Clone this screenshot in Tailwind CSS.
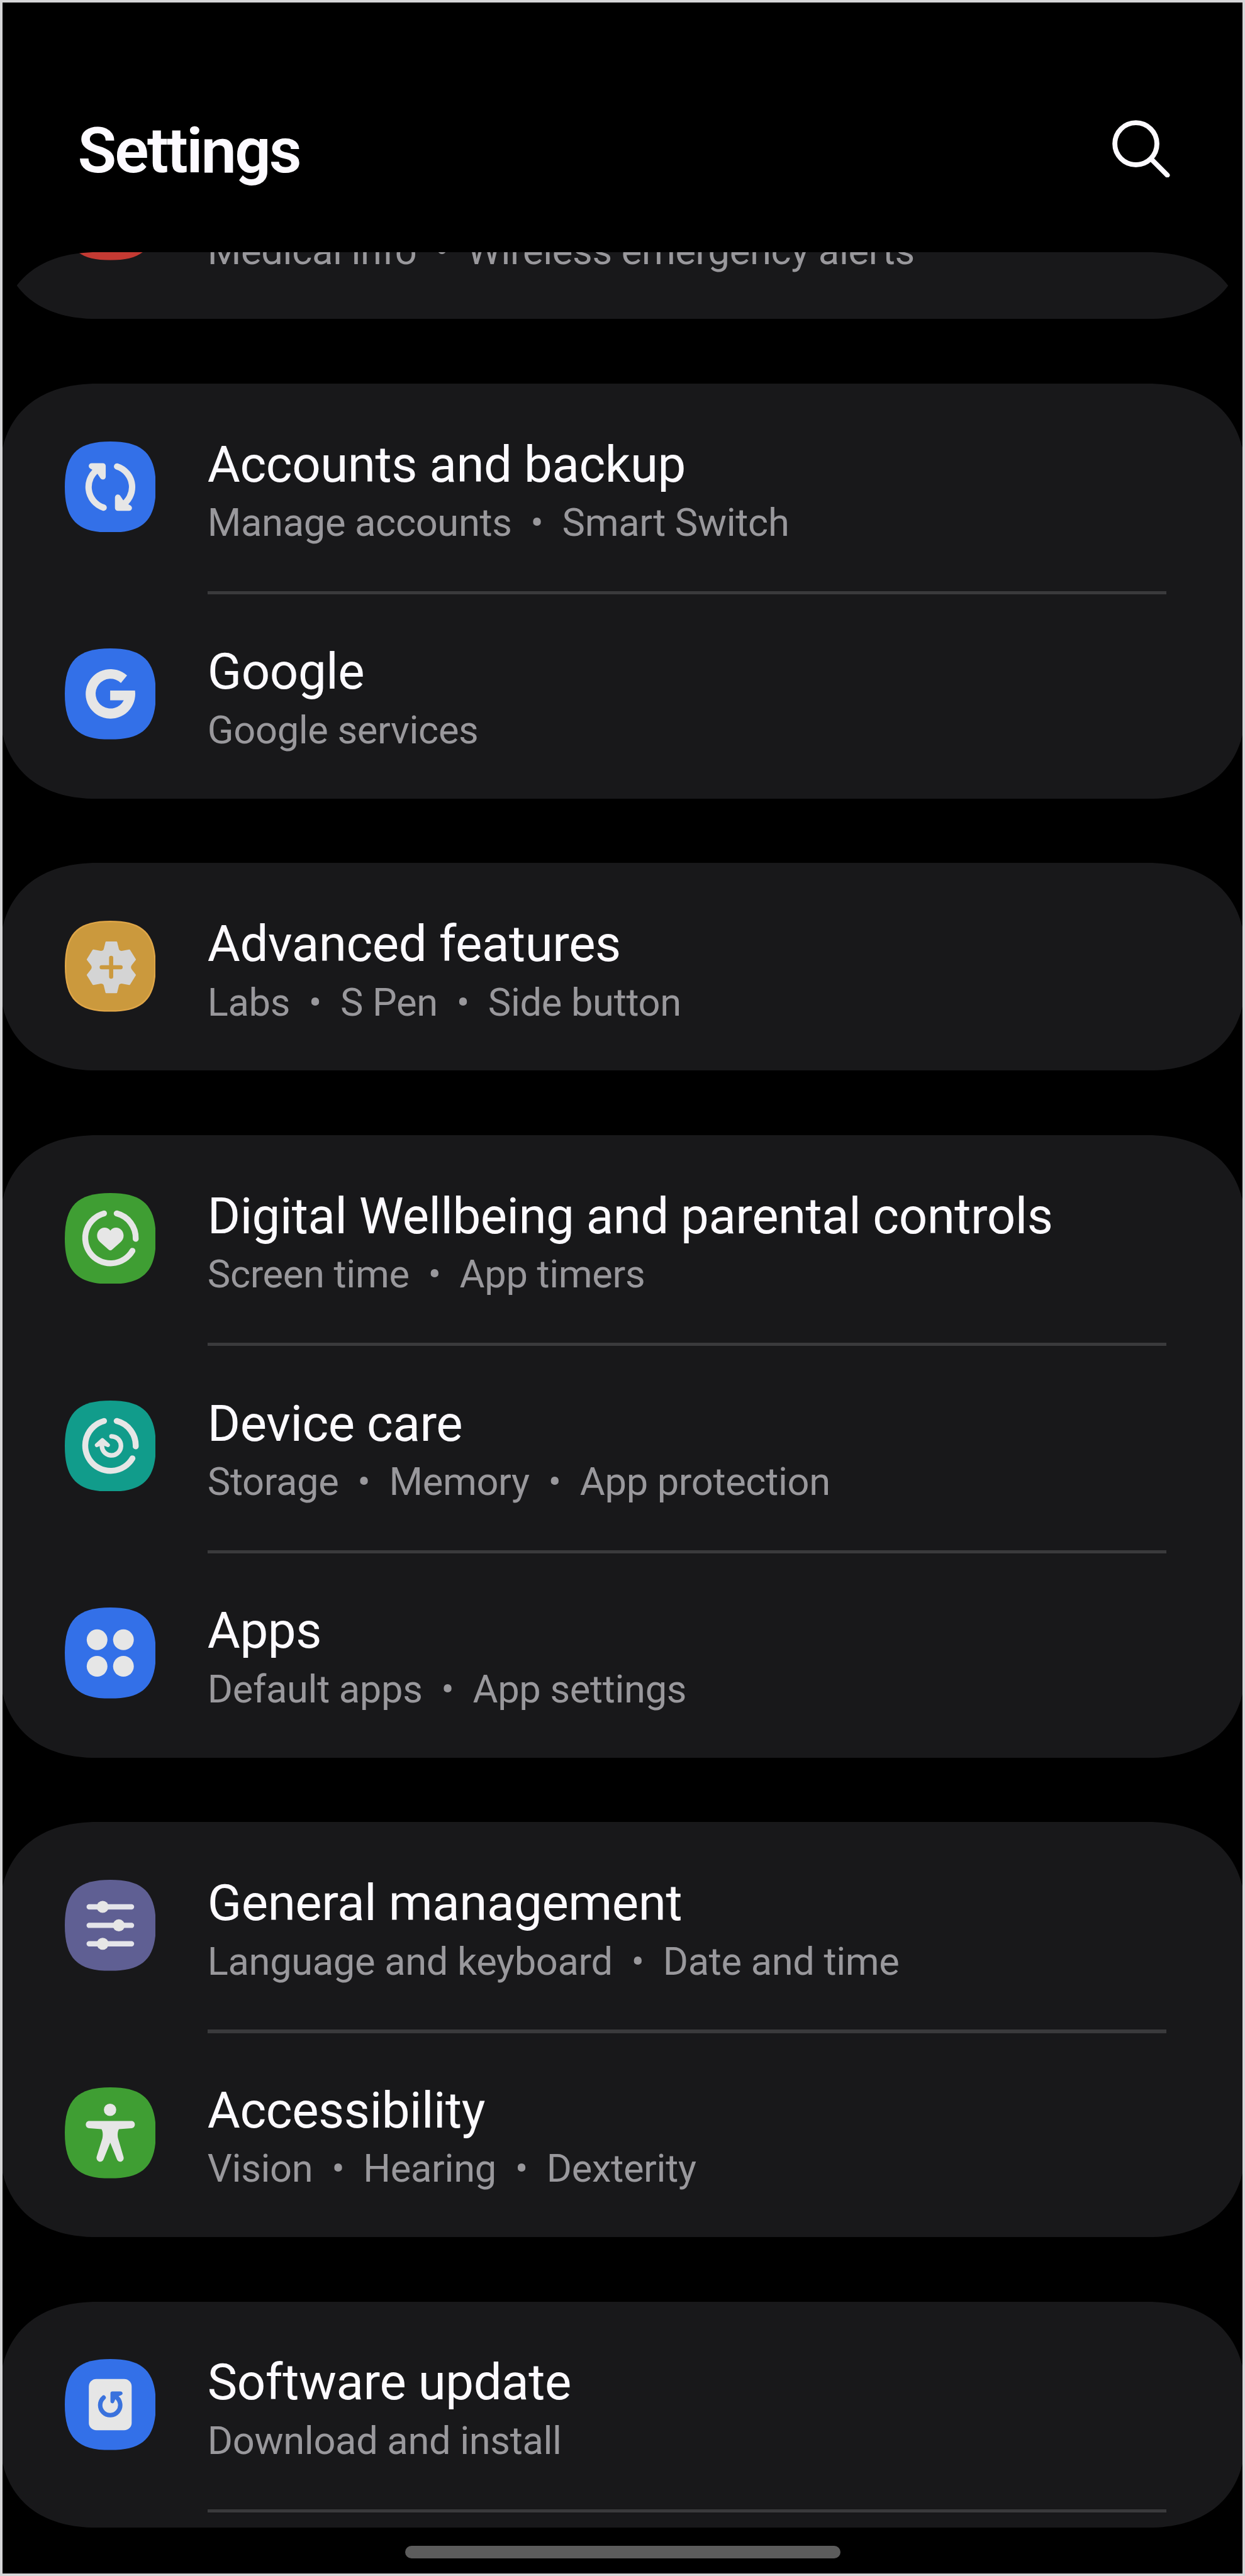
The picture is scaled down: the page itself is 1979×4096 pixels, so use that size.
<!DOCTYPE html>
<html lang="en">
<head>
    <meta charset="UTF-8">
    <meta name="viewport" content="width=device-width, initial-scale=1.0">
    <title>Settings</title>
    <script src="https://cdn.jsdelivr.net/npm/@tailwindcss/browser@4"></script>
</head>
<body class="bg-black">

    <!-- Shared shapes -->
    <svg class="hidden">
        <symbol id="corner" viewBox="0 0 165 165">
            <path fill="#000" d="M-6 165C-6 60 54 0 165 0H-6Z"/>
        </symbol>
        <symbol id="tile" viewBox="0 0 158 158">
            <path d="M0 79C0 22 22 0 79 0S158 22 158 79 136 158 79 158 0 136 0 79Z"/>
        </symbol>
        <symbol id="ring" viewBox="0 0 158 158">
            <path fill="none" stroke="#e6e6e6" stroke-width="10.3" stroke-linecap="round" d="M68 35.4A44 44 0 1 0 117.3 100.3M90 35.4A44 44 0 0 1 123 79.5"/>
        </symbol>
    </svg>

    <div class="flex h-[4096px] w-[1979px] flex-col overflow-hidden border-4 border-[#d6d6d8] bg-black font-['Roboto',sans-serif]">

        <!-- Header -->
        <header class="flex h-[397.3px] shrink-0 items-start justify-between pl-[119.5px] pr-[115px]">
            <h1 class="mt-[177px] text-[101px] leading-[118px] font-semibold tracking-[-2.8px] text-[#fcfaff]">Settings</h1>
            <svg class="mt-[186.6px] size-[91.6px]" viewBox="1930 208 100 100" fill="none" stroke="#fcfaff" stroke-width="8.6" stroke-linecap="round">
                <circle cx="1971" cy="249" r="36.5"/>
                <path d="M1998 276L2025.5 303.5"/>
            </svg>
        </header>

        <!-- Settings list -->
        <main class="flex flex-col gap-[102.7px]">

            <!-- Safety and emergency, scrolled under the header -->
            <section class="relative flex h-[106px] items-end overflow-hidden bg-[#18181a]">
                <div class="flex h-[329.9px] shrink-0 pl-[98.6px]">
                    <svg class="mt-[91.6px] size-[144.8px]" viewBox="0 0 158 158">
                        <use href="#tile" fill="#c43a33"/>
                    </svg>
                    <p class="mt-[185.2px] ml-[82.4px] whitespace-pre text-[61.4px] leading-[72px] tracking-[-0.33px] text-[#99989c]">Medical info  •  Wireless emergency alerts</p>
                </div>
                <svg class="absolute top-0 left-0 size-[151.2px]"><use href="#corner"/></svg>
                <svg class="absolute top-0 right-0 size-[151.2px] -scale-x-100"><use href="#corner"/></svg>
                <svg class="absolute bottom-0 left-0 size-[151.2px] -scale-y-100"><use href="#corner"/></svg>
                <svg class="absolute right-0 bottom-0 size-[151.2px] -scale-100"><use href="#corner"/></svg>
            </section>

            <section class="relative overflow-hidden bg-[#18181a]">
                <!-- Accounts and backup -->
                <div class="flex h-[329.9px] pl-[98.6px]">
                    <svg class="mt-[91.6px] size-[144.8px]" viewBox="0 0 158 158">
                        <use href="#tile" fill="#3370e8"/>
                        <g fill="none" stroke="#e6e6e6" stroke-width="11" stroke-linecap="round" stroke-linejoin="round">
                            <path d="M67.3 114.7A37.5 37.5 0 0 1 60 46.5"/>
                            <path d="M90.7 43.3A37.5 37.5 0 0 1 98 111.5"/>
                            <path fill="#e6e6e6" stroke-width="10" d="M46.5 42.6H66V61L58 49Z" />
                            <path fill="#e6e6e6" stroke-width="10" d="M111.5 115.4H92V97L100 109Z"/>
                        </g>
                    </svg>
                    <div class="mt-[81.6px] ml-[82.4px]">
                        <h2 class="text-[79.8px] leading-[94px] tracking-[-0.4px] text-[#fcfaff]">Accounts and backup</h2>
                        <p class="mt-[9.6px] whitespace-pre text-[61.4px] leading-[72px] tracking-[-0.33px] text-[#99989c]">Manage accounts  •  Smart Switch</p>
                    </div>
                </div>
                <!-- Google -->
                <div class="flex h-[329.9px] pl-[98.6px]">
                    <svg class="mt-[91.6px] size-[144.8px]" viewBox="0 0 158 158">
                        <use href="#tile" fill="#3370e8"/>
                        <path fill="#e6e6e6" d="M108 47A43 43 0 1 0 121.8 73H78.7V90H102.3A25.8 25.8 0 1 1 97.3 60Z"/>
                    </svg>
                    <div class="ml-[82.4px] w-[1524.5px]">
                        <div class="h-[5.5px] bg-[#3a3a3c]"></div>
                        <h2 class="mt-[76.1px] text-[79.8px] leading-[94px] tracking-[-0.4px] text-[#fcfaff]">Google</h2>
                        <p class="mt-[9.6px] whitespace-pre text-[61.4px] leading-[72px] tracking-[-0.33px] text-[#99989c]">Google services</p>
                    </div>
                </div>
                <svg class="absolute top-0 left-0 size-[151.2px]"><use href="#corner"/></svg>
                <svg class="absolute top-0 right-0 size-[151.2px] -scale-x-100"><use href="#corner"/></svg>
                <svg class="absolute bottom-0 left-0 size-[151.2px] -scale-y-100"><use href="#corner"/></svg>
                <svg class="absolute right-0 bottom-0 size-[151.2px] -scale-100"><use href="#corner"/></svg>
            </section>

            <section class="relative overflow-hidden bg-[#18181a]">
                <!-- Advanced features -->
                <div class="flex h-[329.9px] pl-[98.6px]">
                    <svg class="mt-[91.6px] size-[144.8px]" viewBox="0 0 158 158">
                        <use href="#tile" fill="#dfa648"/>
                        <use href="#tile" x="2.5" y="2.5" width="153" height="153" fill="#cb993d"/>
                        <path fill="#d4d4d4" stroke="#d4d4d4" stroke-width="3" stroke-linejoin="round" d="M72 37.5H89.4L92.5 50Q94 54 99 53.8L112 51.5L121.8 67.3L115 76Q111.5 80.7 115 85.4L121.8 94.2L112 110L99 107.7Q94 107.5 92.5 111.5L89.4 124.2H72L68.9 111.5Q67.4 107.5 62.4 107.7L49.4 110L39.6 94.2L46.4 85.4Q49.9 80.7 46.4 76L39.6 67.3L49.4 51.5L62.4 53.8Q67.4 54 68.9 50Z"/>
                        <path stroke="#cb993d" stroke-width="7.2" stroke-linecap="round" d="M64 80.7H96.8M80.4 64.3V97.1"/>
                    </svg>
                    <div class="mt-[81.6px] ml-[82.4px]">
                        <h2 class="text-[79.8px] leading-[94px] tracking-[-0.4px] text-[#fcfaff]">Advanced features</h2>
                        <p class="mt-[9.6px] whitespace-pre text-[61.4px] leading-[72px] tracking-[-0.33px] text-[#99989c]">Labs  •  S Pen  •  Side button</p>
                    </div>
                </div>
                <svg class="absolute top-0 left-0 size-[151.2px]"><use href="#corner"/></svg>
                <svg class="absolute top-0 right-0 size-[151.2px] -scale-x-100"><use href="#corner"/></svg>
                <svg class="absolute bottom-0 left-0 size-[151.2px] -scale-y-100"><use href="#corner"/></svg>
                <svg class="absolute right-0 bottom-0 size-[151.2px] -scale-100"><use href="#corner"/></svg>
            </section>

            <section class="relative overflow-hidden bg-[#18181a]">
                <!-- Digital Wellbeing -->
                <div class="flex h-[329.9px] pl-[98.6px]">
                    <svg class="mt-[91.6px] size-[144.8px]" viewBox="0 0 158 158">
                        <use href="#tile" fill="#3f9e33"/>
                        <use href="#ring"/>
                        <path fill="#e6e6e6" d="M79 99.5C77.5 99.5 76.5 98.5 75 97.3L61.5 85.5C58 82.3 56 78.5 56 74C56 66 61.8 60 69 60C73 60 77 61.8 79 65.3C81 61.8 85 60 89 60C96.2 60 102 66 102 74C102 78.5 100 82.3 96.5 85.5L83 97.3C81.5 98.5 80.5 99.5 79 99.5Z"/>
                    </svg>
                    <div class="mt-[81.6px] ml-[82.4px]">
                        <h2 class="text-[79.8px] leading-[94px] tracking-[-0.48px] text-[#fcfaff]">Digital Wellbeing and parental controls</h2>
                        <p class="mt-[9.6px] whitespace-pre text-[61.4px] leading-[72px] tracking-[-0.33px] text-[#99989c]">Screen time  •  App timers</p>
                    </div>
                </div>
                <!-- Device care -->
                <div class="flex h-[329.9px] pl-[98.6px]">
                    <svg class="mt-[91.6px] size-[144.8px]" viewBox="0 0 158 158">
                        <use href="#tile" fill="#119c8b"/>
                        <use href="#ring"/>
                        <g fill="none" stroke="#e6e6e6" stroke-width="8" stroke-linecap="round" stroke-linejoin="round">
                            <path d="M81 62A16.5 16.5 0 1 1 64.6 76"/>
                            <path fill="#e6e6e6" stroke-width="7" d="M55.5 77.3L65.2 68.6L74.8 77.3L65 73.5Z"/>
                        </g>
                    </svg>
                    <div class="ml-[82.4px] w-[1524.5px]">
                        <div class="h-[5.5px] bg-[#3a3a3c]"></div>
                        <h2 class="mt-[76.1px] text-[79.8px] leading-[94px] tracking-[-0.4px] text-[#fcfaff]">Device care</h2>
                        <p class="mt-[9.6px] whitespace-pre text-[61.4px] leading-[72px] tracking-[-0.33px] text-[#99989c]">Storage  •  Memory  •  App protection</p>
                    </div>
                </div>
                <!-- Apps -->
                <div class="flex h-[329.9px] pl-[98.6px]">
                    <svg class="mt-[91.6px] size-[144.8px]" viewBox="0 0 158 158">
                        <use href="#tile" fill="#3370e8"/>
                        <g fill="#e6e6e6">
                            <circle cx="56" cy="56" r="18"/>
                            <circle cx="101.7" cy="56" r="18"/>
                            <circle cx="56" cy="102" r="18"/>
                            <circle cx="101.7" cy="102" r="18"/>
                        </g>
                    </svg>
                    <div class="ml-[82.4px] w-[1524.5px]">
                        <div class="h-[5.5px] bg-[#3a3a3c]"></div>
                        <h2 class="mt-[76.1px] text-[79.8px] leading-[94px] tracking-[-0.4px] text-[#fcfaff]">Apps</h2>
                        <p class="mt-[9.6px] whitespace-pre text-[61.4px] leading-[72px] tracking-[-0.33px] text-[#99989c]">Default apps  •  App settings</p>
                    </div>
                </div>
                <svg class="absolute top-0 left-0 size-[151.2px]"><use href="#corner"/></svg>
                <svg class="absolute top-0 right-0 size-[151.2px] -scale-x-100"><use href="#corner"/></svg>
                <svg class="absolute bottom-0 left-0 size-[151.2px] -scale-y-100"><use href="#corner"/></svg>
                <svg class="absolute right-0 bottom-0 size-[151.2px] -scale-100"><use href="#corner"/></svg>
            </section>

            <section class="relative overflow-hidden bg-[#18181a]">
                <!-- General management -->
                <div class="flex h-[329.9px] pl-[98.6px]">
                    <svg class="mt-[91.6px] size-[144.8px]" viewBox="0 0 158 158">
                        <use href="#tile" fill="#5f5f93"/>
                        <path stroke="#e4e4ea" stroke-width="9.2" stroke-linecap="round" d="M42.3 47H115.7M42.3 79H115.7M42.3 111H115.7"/>
                        <g fill="#e6e6e6">
                            <circle cx="65.7" cy="47" r="10.4"/>
                            <circle cx="93.7" cy="79" r="10.4"/>
                            <circle cx="65.7" cy="111" r="10.4"/>
                        </g>
                    </svg>
                    <div class="mt-[81.6px] ml-[82.4px]">
                        <h2 class="text-[79.8px] leading-[94px] tracking-[-0.4px] text-[#fcfaff]">General management</h2>
                        <p class="mt-[9.6px] whitespace-pre text-[61.4px] leading-[72px] tracking-[-0.33px] text-[#99989c]">Language and keyboard  •  Date and time</p>
                    </div>
                </div>
                <!-- Accessibility -->
                <div class="flex h-[329.9px] pl-[98.6px]">
                    <svg class="mt-[91.6px] size-[144.8px]" viewBox="0 0 158 158">
                        <use href="#tile" fill="#3f9e33"/>
                        <g fill="#e6e6e6">
                            <circle cx="78.5" cy="39" r="10.7"/>
                            <path d="M42.5 58.5H115.5C123.5 58.5 123.5 70.5 115.8 71L94 72.5C91.5 76 91.2 83 92.5 89L101.8 120.5C104 128 94.5 132.5 90.7 125.5L78.8 96L66.9 125.5C63.1 132.5 53.6 128 55.2 120.5L65.1 89C66.4 83 66.1 76 63.6 72.5L42.2 71C34.5 70.5 34.5 58.5 42.5 58.5Z"/>
                        </g>
                    </svg>
                    <div class="ml-[82.4px] w-[1524.5px]">
                        <div class="h-[5.5px] bg-[#3a3a3c]"></div>
                        <h2 class="mt-[76.1px] text-[79.8px] leading-[94px] tracking-[-0.4px] text-[#fcfaff]">Accessibility</h2>
                        <p class="mt-[9.6px] whitespace-pre text-[61.4px] leading-[72px] tracking-[-0.33px] text-[#99989c]">Vision  •  Hearing  •  Dexterity</p>
                    </div>
                </div>
                <svg class="absolute top-0 left-0 size-[151.2px]"><use href="#corner"/></svg>
                <svg class="absolute top-0 right-0 size-[151.2px] -scale-x-100"><use href="#corner"/></svg>
                <svg class="absolute bottom-0 left-0 size-[151.2px] -scale-y-100"><use href="#corner"/></svg>
                <svg class="absolute right-0 bottom-0 size-[151.2px] -scale-100"><use href="#corner"/></svg>
            </section>

            <section class="relative h-[358.9px] overflow-hidden bg-[#18181a]">
                <!-- Software update -->
                <div class="flex h-[329.9px] pl-[98.6px]">
                    <svg class="mt-[91.6px] size-[144.8px]" viewBox="0 0 158 158">
                        <use href="#tile" fill="#3370e8"/>
                        <rect x="41.7" y="34.7" width="74.3" height="89" rx="13" fill="#e6e6e6"/>
                        <g fill="none" stroke="#3a72dd" stroke-width="7.7" stroke-linecap="round" stroke-linejoin="round">
                            <path d="M67.3 66.9A17.4 17.4 0 1 0 89 65.9"/>
                            <path fill="#3a72dd" stroke-width="6.6" d="M96.8 59.5H82.5V73.5L86.5 64Z"/>
                        </g>
                    </svg>
                    <div class="mt-[81.6px] ml-[82.4px]">
                        <h2 class="text-[79.8px] leading-[94px] tracking-[-0.4px] text-[#fcfaff]">Software update</h2>
                        <p class="mt-[9.6px] whitespace-pre text-[61.4px] leading-[72px] tracking-[-0.33px] text-[#99989c]">Download and install</p>
                    </div>
                </div>
                <div class="ml-[325.8px] h-[5.5px] w-[1524.5px] bg-[#3a3a3c]"></div>
                <svg class="absolute top-0 left-0 size-[151.2px]"><use href="#corner"/></svg>
                <svg class="absolute top-0 right-0 size-[151.2px] -scale-x-100"><use href="#corner"/></svg>
                <svg class="absolute bottom-0 left-0 size-[151.2px] -scale-y-100"><use href="#corner"/></svg>
                <svg class="absolute right-0 bottom-0 size-[151.2px] -scale-100"><use href="#corner"/></svg>
            </section>
        </main>

        <!-- Gesture bar -->
        <div class="mx-auto mt-[29.6px] h-[20px] w-[692px] shrink-0 rounded-full bg-[#5c5c5c]"></div>
    </div>

</body>
</html>
